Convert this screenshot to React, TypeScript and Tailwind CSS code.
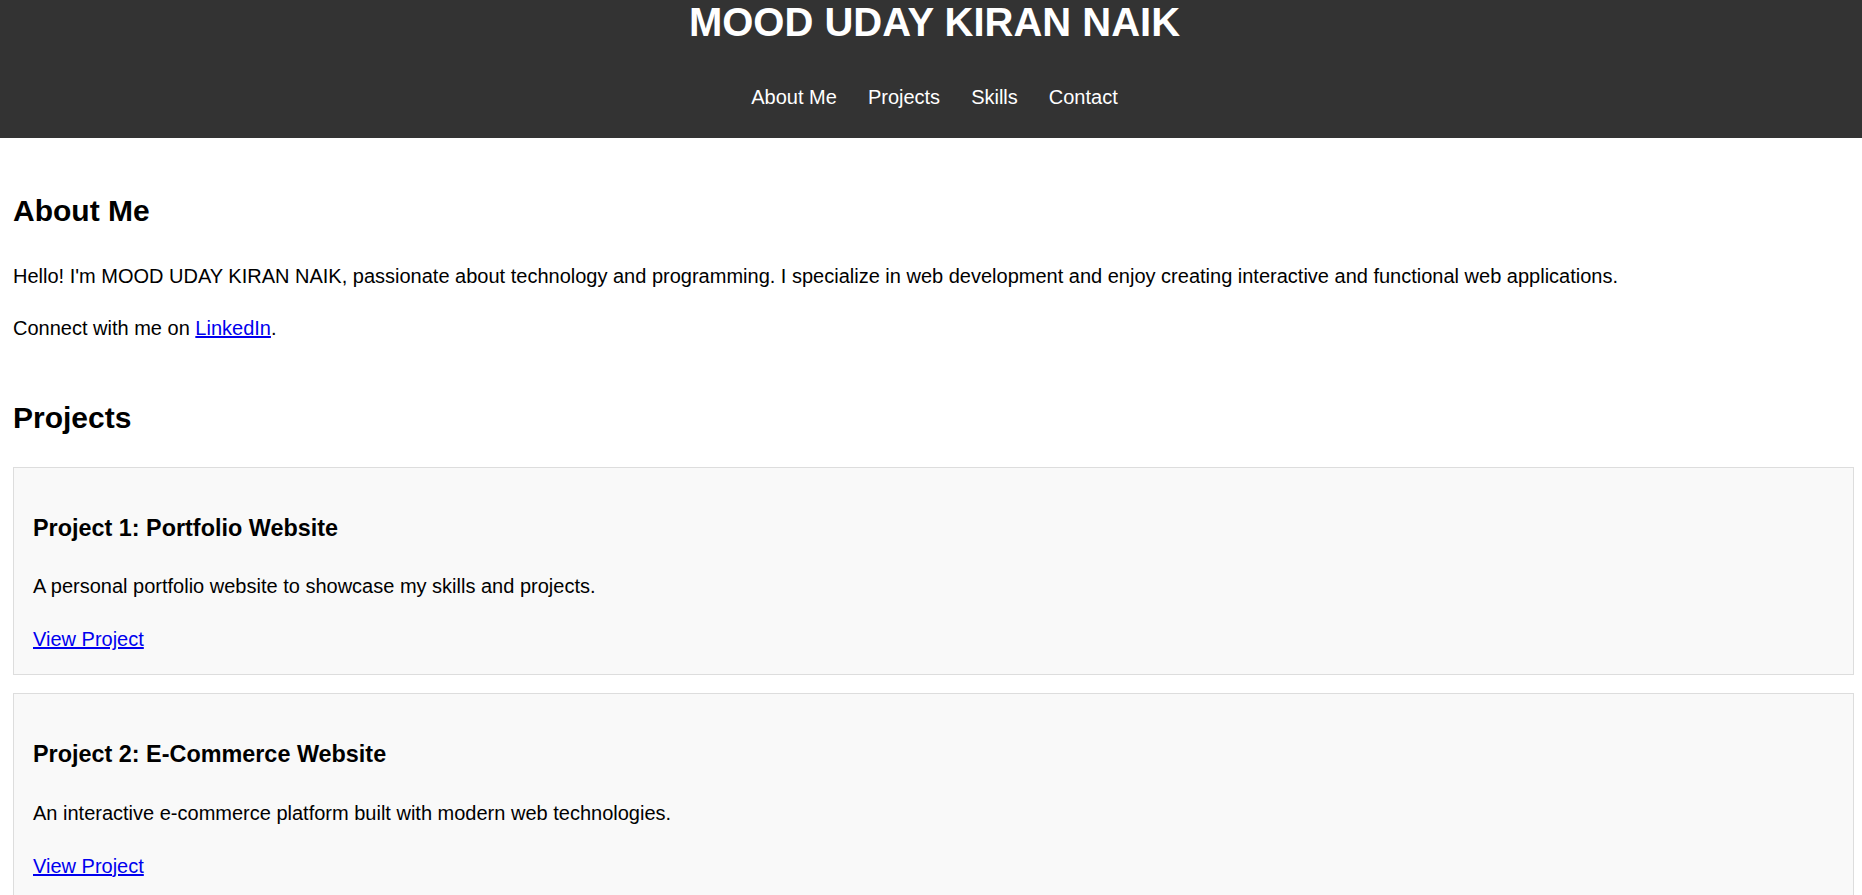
const projects = [
  {
    title: 'Project 1: Portfolio Website',
    text: 'A personal portfolio website to showcase my skills and projects.',
  },
  {
    title: 'Project 2: E-Commerce Website',
    text: 'An interactive e-commerce platform built with modern web technologies.',
  },
];

const navLinks = ['About Me', 'Projects', 'Skills', 'Contact'];

function ProjectCard({ title, text }: { title: string; text: string }) {
  return (
    <div className="mb-[18px] mr-[-5px] flex flex-col items-start border border-[#ddd] bg-[#f9f9f9] px-[19px] pt-[19px] pb-[19px]">
      <h3 className="mt-[23px] mb-[23px] text-[23.4px] leading-[37.4px] font-bold">{title}</h3>
      <p className="mb-[21px] text-[20px] leading-[32px]">{text}</p>
      <a href="#" className="text-[20px] leading-[32px] text-[#0000ee] underline">
        View Project
      </a>
    </div>
  );
}

export default function App() {
  return (
    <div className="min-h-screen bg-white text-black [font-family:'Liberation_Sans',Arial,sans-serif]">
      {/* Header */}
      <header className="flex flex-col items-center bg-[#333] pb-[25px] pl-[7px] text-white">
        <h1 className="text-[40px] leading-[44px] font-bold">MOOD UDAY KIRAN NAIK</h1>
        <nav className="mt-[37px] flex justify-center gap-[31px] text-[20px] leading-[32px]">
          {navLinks.map((l) => (
            <a key={l} href="#" className="text-white">
              {l}
            </a>
          ))}
        </nav>
      </header>

      <main className="flex flex-col px-[13px] pt-[24px]">
        {/* About */}
        <section id="about" className="flex flex-col">
          <h2 className="mt-[25px] mb-[25px] text-[30px] leading-[48px] font-bold">About Me</h2>
          <p className="mb-[20px] text-[20px] leading-[32px]">
            Hello! I'm MOOD UDAY KIRAN NAIK, passionate about technology and programming. I specialize in web
            development and enjoy creating interactive and functional web applications.
          </p>
          <p className="mb-[25px] text-[20px] leading-[32px]">
            Connect with me on{' '}
            <a href="#" className="text-[#0000ee] underline">
              LinkedIn
            </a>
            .
          </p>
        </section>

        {/* Projects */}
        <section id="projects" className="flex flex-col">
          <h2 className="mt-[25px] mb-[25px] text-[30px] leading-[48px] font-bold">Projects</h2>
          {projects.map((p) => (
            <ProjectCard key={p.title} title={p.title} text={p.text} />
          ))}
        </section>

        {/* Skills */}
        <section id="skills" className="flex flex-col">
          <h2 className="mt-[25px] mb-[25px] text-[30px] leading-[48px] font-bold">Skills</h2>
          <p className="mb-[20px] text-[20px] leading-[32px]">HTML, CSS, JavaScript, React</p>
        </section>
      </main>
    </div>
  );
}
